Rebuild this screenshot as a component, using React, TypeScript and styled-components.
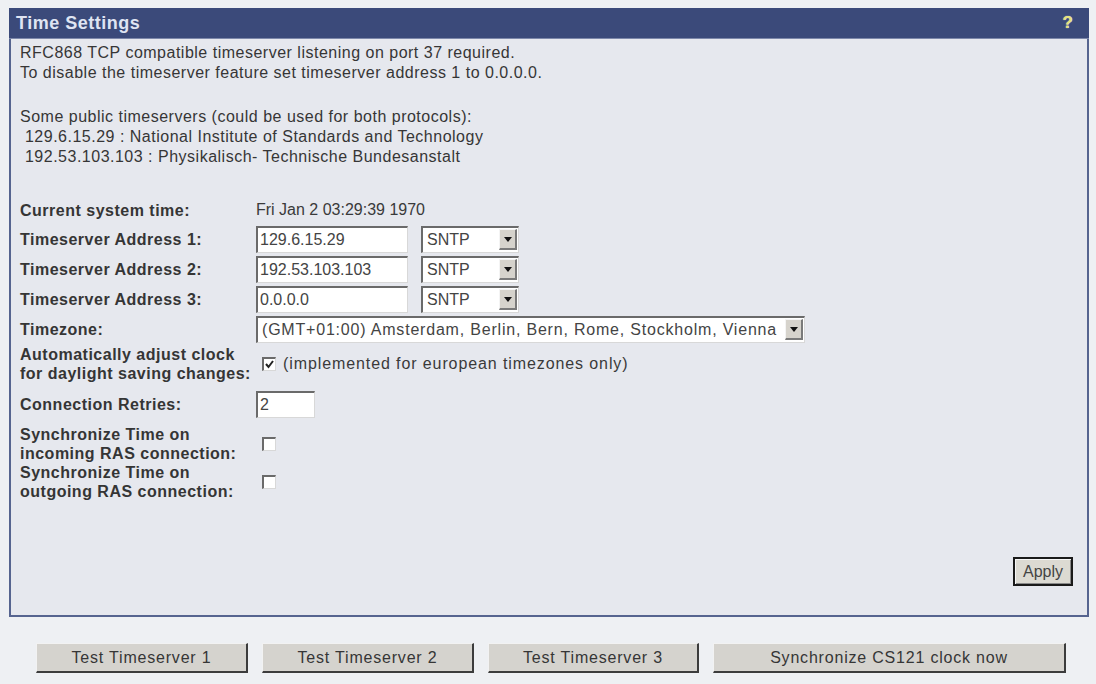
import React from "react"
import styled, { createGlobalStyle } from "styled-components"

const GlobalStyle = createGlobalStyle`
  body {
    margin: 0;
    background: #eef0f3;
    font-family: "Liberation Sans", Arial, sans-serif;
    color: #363636;
  }
`

interface SelectProps {
  value: string
  width: number
  spacing?: number // letter spacing of the shown option
}

const FakeSelect = ({ value, width, spacing = 0 }: SelectProps): JSX.Element => (
  <SelectBox $w={width}>
    <SelectText $ls={spacing}>{value}</SelectText>
    <ArrowButton>
      <svg width="8" height="5" viewBox="0 0 8 5">
        <path d="M0 0 H8 L4 5 Z" fill="#111" />
      </svg>
    </ArrowButton>
  </SelectBox>
)

const CheckBox = ({ checked }: { checked?: boolean }): JSX.Element => (
  <Box>
    {checked && (
      <svg width="11" height="11" viewBox="0 0 11 11">
        <path d="M2 5 L4.5 8 L9 2" stroke="#222" strokeWidth="2" fill="none" />
      </svg>
    )}
  </Box>
)

const servers = [
  { label: "Timeserver Address 1:", value: "129.6.15.29" },
  { label: "Timeserver Address 2:", value: "192.53.103.103" },
  { label: "Timeserver Address 3:", value: "0.0.0.0" },
]

const App = (): JSX.Element => (
  <Page>
    <GlobalStyle />
    <Panel>
      <Header>
        <Title>Time Settings</Title>
        <Help>?</Help>
      </Header>
      <Body>
        <Intro>
          RFC868 TCP compatible timeserver listening on port 37 required.
          <br />
          To disable the timeserver feature set timeserver address 1 to 0.0.0.0.
        </Intro>
        <Intro $top={24}>
          Some public timeservers (could be used for both protocols):
          <br />
          &nbsp;129.6.15.29 : National Institute of Standards and Technology
          <br />
          &nbsp;192.53.103.103 : Physikalisch- Technische Bundesanstalt
        </Intro>
        <Form>
          <Row $h={26}>
            <Label>Current system time:</Label>
            <Value>Fri Jan 2 03:29:39 1970</Value>
          </Row>
          {servers.map((s) => (
            <Row $h={28} key={s.label}>
              <Label>{s.label}</Label>
              <Field>
                <TextInput $w={152} defaultValue={s.value} />
                <FakeSelect value="SNTP" width={98} />
              </Field>
            </Row>
          ))}
          <Row $h={28}>
            <Label>Timezone:</Label>
            <FakeSelect
              value="(GMT+01:00) Amsterdam, Berlin, Bern, Rome, Stockholm, Vienna"
              width={549}
              spacing={0.8}
            />
          </Row>
          <Row $h={38}>
            <Label>
              Automatically adjust clock
              <br />
              for daylight saving changes:
            </Label>
            <CheckField>
              <CheckBox checked />
              <Value $ls={0.9}>(implemented for european timezones only)</Value>
            </CheckField>
          </Row>
          <Row $h={38}>
            <Label>Connection Retries:</Label>
            <TextInput $w={59} defaultValue="2" />
          </Row>
          <Row $h={36}>
            <Label>
              Synchronize Time on
              <br />
              incoming RAS connection:
            </Label>
            <CheckField>
              <CheckBox />
            </CheckField>
          </Row>
          <Row $h={38}>
            <Label>
              Synchronize Time on
              <br />
              outgoing RAS connection:
            </Label>
            <CheckField>
              <CheckBox />
            </CheckField>
          </Row>
        </Form>
        <Footer>
          <ApplyButton>Apply</ApplyButton>
        </Footer>
      </Body>
    </Panel>
    <ButtonBar>
      <ActionButton $w={212}>Test Timeserver 1</ActionButton>
      <ActionButton $w={212}>Test Timeserver 2</ActionButton>
      <ActionButton $w={211}>Test Timeserver 3</ActionButton>
      <ActionButton $w={353}>Synchronize CS121 clock now</ActionButton>
    </ButtonBar>
  </Page>
)

const Page = styled.div`
  padding: 8px 7px 12px 9px;
  font-size: 16px;
`

const Panel = styled.div`
  border: 2px solid #56648f;
  border-top: 0;
  background: #e6e8ee;
`

const Header = styled.div`
  height: 30px;
  background: #3b4a7a;
  display: flex;
  align-items: center;
  justify-content: space-between;
  padding: 0 16px 0 7px;
  margin: 0 -2px;
  border-bottom: 1px solid #7d88aa;
`

const Title = styled.div`
  color: #dfe4f2;
  font-weight: bold;
  font-size: 18px;
  letter-spacing: 0.5px;
`

const Help = styled.div`
  color: #e6e27a;
  font-weight: bold;
  font-size: 17px;
  text-shadow: 0 0 1px #fff;
`

const Body = styled.div`
  padding: 4px 14px 29px 9px;
`

const Intro = styled.div<{ $top?: number }>`
  line-height: 20px;
  letter-spacing: 0.5px;
  margin-top: ${(p) => p.$top ?? 0}px;
`

const Form = styled.div`
  margin-top: 30px;
  display: flex;
  flex-direction: column;
  gap: 2px;
`

const Row = styled.div<{ $h: number }>`
  display: grid;
  grid-template-columns: 236px 1fr;
  align-items: center;
  height: ${(p) => p.$h}px;
`

const Label = styled.div`
  font-weight: bold;
  line-height: 19px;
  letter-spacing: 0.5px;
  color: #353535;
`

const Value = styled.div<{ $ls?: number }>`
  color: #3a3a3a;
  letter-spacing: ${(p) => p.$ls ?? 0}px;
`

const Field = styled.div`
  display: flex;
  gap: 13px;
`

const CheckField = styled.div`
  display: flex;
  align-items: center;
  gap: 7px;
  padding-left: 6px;
`

const inset = `
  border-style: solid;
  border-width: 2px 1px 1px 2px;
  border-color: #6a6a6a #d8d8d8 #d8d8d8 #6a6a6a;
`

const TextInput = styled.input<{ $w: number }>`
  box-sizing: border-box;
  width: ${(p) => p.$w}px;
  height: 27px;
  ${inset}
  background: #fff;
  font: 16px "Liberation Sans", Arial, sans-serif;
  color: #444;
  padding: 0 2px;
  outline: none;
`

const SelectBox = styled.div<{ $w: number }>`
  box-sizing: border-box;
  width: ${(p) => p.$w}px;
  height: 27px;
  ${inset}
  background: #fff;
  display: flex;
  align-items: center;
  justify-content: space-between;
  padding: 0 1px 0 4px;
`

const SelectText = styled.span<{ $ls: number }>`
  color: #444;
  white-space: nowrap;
  overflow: hidden;
  letter-spacing: ${(p) => p.$ls}px;
`

const ArrowButton = styled.span`
  box-sizing: border-box;
  width: 18px;
  height: 21px;
  background: #d6d3cc;
  border-style: solid;
  border-width: 1px 2px 2px 1px;
  border-color: #f4f4f4 #7a7a7a #7a7a7a #f4f4f4;
  display: flex;
  align-items: center;
  justify-content: center;
  flex-shrink: 0;
`

const Box = styled.span`
  box-sizing: border-box;
  width: 14px;
  height: 14px;
  ${inset}
  background: #fff;
  display: flex;
  align-items: center;
  justify-content: center;
`

const Footer = styled.div`
  display: flex;
  justify-content: flex-end;
  margin-top: 56px;
`

const ApplyButton = styled.button`
  box-sizing: border-box;
  width: 60px;
  height: 29px;
  border: 2px solid #1a1a1a;
  background: #dcdad2;
  box-shadow: inset 1px 1px 0 #f6f6f6, inset -1px -1px 0 #8a8a8a;
  font: 16px "Liberation Sans", Arial, sans-serif;
  color: #444;
  padding: 0;
`

const ButtonBar = styled.div`
  display: flex;
  gap: 14px;
  margin-top: 26px;
  padding-left: 27px;
`

const ActionButton = styled.button<{ $w: number }>`
  box-sizing: border-box;
  width: ${(p) => p.$w}px;
  height: 30px;
  background: #d5d3ce;
  border-style: solid;
  border-width: 1px 2px 2px 1px;
  border-color: #f2f2f2 #3c3c3c #3c3c3c #f2f2f2;
  font: 16px "Liberation Sans", Arial, sans-serif;
  letter-spacing: 0.8px;
  color: #363636;
  padding: 0;
`

export default App
